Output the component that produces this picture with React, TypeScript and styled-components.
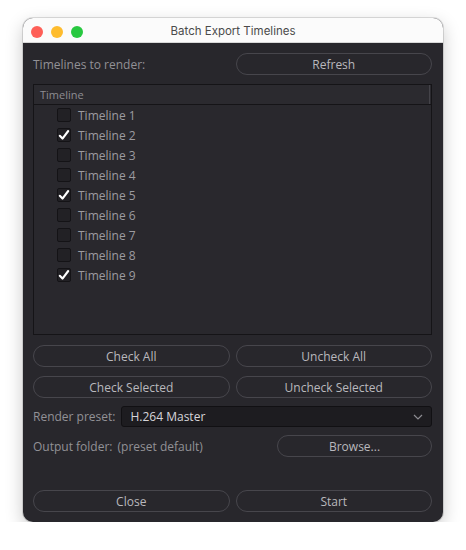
import * as React from 'react';
import styled, { createGlobalStyle } from 'styled-components';

const GlobalStyle = createGlobalStyle`
  html, body {
    margin: 0;
    padding: 0;
    background: #ffffff;
  }
  body {
    font-family: 'Open Sans', 'Noto Sans', sans-serif;
  }
`;

const timelines = [
  { name: 'Timeline 1', checked: false },
  { name: 'Timeline 2', checked: true },
  { name: 'Timeline 3', checked: false },
  { name: 'Timeline 4', checked: false },
  { name: 'Timeline 5', checked: true },
  { name: 'Timeline 6', checked: false },
  { name: 'Timeline 7', checked: false },
  { name: 'Timeline 8', checked: false },
  { name: 'Timeline 9', checked: true },
];

const CheckMark = () => (
  <svg width="12" height="12" viewBox="0 0 12 12">
    <path
      d="M1.8 6.8 L4.5 9.6 L10.2 2"
      fill="none"
      stroke="#ffffff"
      strokeWidth="2.1"
      strokeLinecap="round"
      strokeLinejoin="round"
    />
  </svg>
);

const Chevron = () => (
  <svg width="10" height="6" viewBox="0 0 10 6">
    <path d="M1 1 L5 5 L9 1" fill="none" stroke="#8d8c92" strokeWidth="1.2" />
  </svg>
);

export default function App() {
  const [items, setItems] = React.useState(timelines);
  const toggle = (i: number) =>
    setItems(prev => prev.map((t, j) => (j === i ? { ...t, checked: !t.checked } : t)));

  return (
    <>
      <GlobalStyle />
      <Page>
        <Window>
          <TitleBar>
            <Lights>
              <Light color="#fe5f57" />
              <Light color="#febc2e" />
              <Light color="#28c840" />
            </Lights>
            <Title>Batch Export Timelines</Title>
          </TitleBar>
          <Content>
            <TwoCols>
              <Label>Timelines to render:</Label>
              <PillButton>Refresh</PillButton>
            </TwoCols>
            <List>
              <ListHeader>
                <HeaderCell>Timeline</HeaderCell>
              </ListHeader>
              <Rows>
                {items.map((t, i) => (
                  <Row key={t.name} onClick={() => toggle(i)}>
                    <Box>{t.checked ? <CheckMark /> : null}</Box>
                    <RowText>{t.name}</RowText>
                  </Row>
                ))}
              </Rows>
            </List>
            <ButtonGrid>
              <PillButton>Check All</PillButton>
              <PillButton>Uncheck All</PillButton>
              <PillButton>Check Selected</PillButton>
              <PillButton>Uncheck Selected</PillButton>
            </ButtonGrid>
            <PresetRow>
              <Label>Render preset:</Label>
              <Combo>
                <span>H.264 Master</span>
                <Chevron />
              </Combo>
            </PresetRow>
            <FolderRow>
              <Label>Output folder:</Label>
              <Label>(preset default)</Label>
              <BrowseButton>Browse...</BrowseButton>
            </FolderRow>
            <Spacer />
            <TwoCols>
              <PillButton>Close</PillButton>
              <PillButton>Start</PillButton>
            </TwoCols>
          </Content>
        </Window>
      </Page>
    </>
  );
}

const Page = styled.div`
  padding: 18px 0 0 23px;
`;

const Window = styled.div`
  width: 420px;
  height: 504px;
  border-radius: 10px;
  overflow: hidden;
  display: flex;
  flex-direction: column;
  background: #28272c;
  box-shadow: 0 0 0 1px rgba(0, 0, 0, 0.12), 0 6px 18px rgba(0, 0, 0, 0.22);
`;

const TitleBar = styled.div`
  height: 24px;
  flex: none;
  position: relative;
  display: flex;
  align-items: center;
  justify-content: center;
  background: #fbfbfb;
  border-bottom: 1px solid #d8d8d8;
`;

const Lights = styled.div`
  position: absolute;
  left: 8px;
  top: 8px;
  display: flex;
  gap: 8px;
`;

const Light = styled.div<{ color: string }>`
  width: 12px;
  height: 12px;
  border-radius: 50%;
  background: ${p => p.color};
`;

const Title = styled.div`
  font-family: 'Inter', 'Noto Sans', sans-serif;
  font-size: 11.5px;
  color: #4b4b4b;
  margin-top: 1px;
`;

const Content = styled.div`
  flex: 1;
  display: flex;
  flex-direction: column;
  padding: 10px 11px 10px 10px;
`;

const TwoCols = styled.div`
  display: grid;
  grid-template-columns: 1fr 1fr;
  column-gap: 6px;
  align-items: center;
`;

const Label = styled.span`
  font-size: 12px;
  color: #929196;
  white-space: nowrap;
`;

const PillButton = styled.button`
  height: 22px;
  border-radius: 11px;
  border: 1px solid #47464c;
  background: transparent;
  color: #b9b8bd;
  font-family: 'Open Sans', 'Noto Sans', sans-serif;
  font-size: 12px;
  padding: 0 8px;
  cursor: pointer;
`;

const List = styled.div`
  margin-top: 9px;
  height: 251px;
  box-sizing: border-box;
  border: 1px solid #151417;
  display: flex;
  flex-direction: column;
  background: #29282d;
`;

const ListHeader = styled.div`
  height: 19px;
  flex: none;
  display: flex;
  background: #2b2a2f;
  border-bottom: 1px solid #151417;
`;

const HeaderCell = styled.div`
  flex: 1;
  display: flex;
  align-items: center;
  padding-left: 6px;
  font-size: 11px;
  color: #8e8d92;
  border-right: 1px solid #444349;
  margin-right: 1px;
`;

const Rows = styled.div`
  display: flex;
  flex-direction: column;
`;

const Row = styled.div`
  height: 20px;
  display: flex;
  align-items: center;
  padding-left: 23px;
  gap: 7px;
  cursor: pointer;
`;

const Box = styled.div`
  width: 14px;
  height: 14px;
  box-sizing: border-box;
  border: 1px solid #141316;
  border-radius: 2px;
  background: #222125;
  display: flex;
  align-items: center;
  justify-content: center;
`;

const RowText = styled.span`
  font-size: 12px;
  color: #9c9ba0;
`;

const ButtonGrid = styled(TwoCols)`
  margin-top: 10px;
  row-gap: 9px;
`;

const PresetRow = styled.div`
  margin-top: 8px;
  display: flex;
  align-items: center;
  gap: 6px;
`;

const Combo = styled.div`
  flex: 1;
  height: 21px;
  box-sizing: border-box;
  border: 1px solid #111013;
  border-radius: 3px;
  background: #1d1c20;
  display: flex;
  align-items: center;
  justify-content: space-between;
  padding: 0 8px 0 8px;
  font-size: 12px;
  color: #d6d5da;
`;

const FolderRow = styled.div`
  margin-top: 8px;
  display: flex;
  align-items: center;
  gap: 5px;
`;

const BrowseButton = styled(PillButton)`
  margin-left: auto;
  width: 155px;
`;

const Spacer = styled.div`
  flex: 1;
`;
